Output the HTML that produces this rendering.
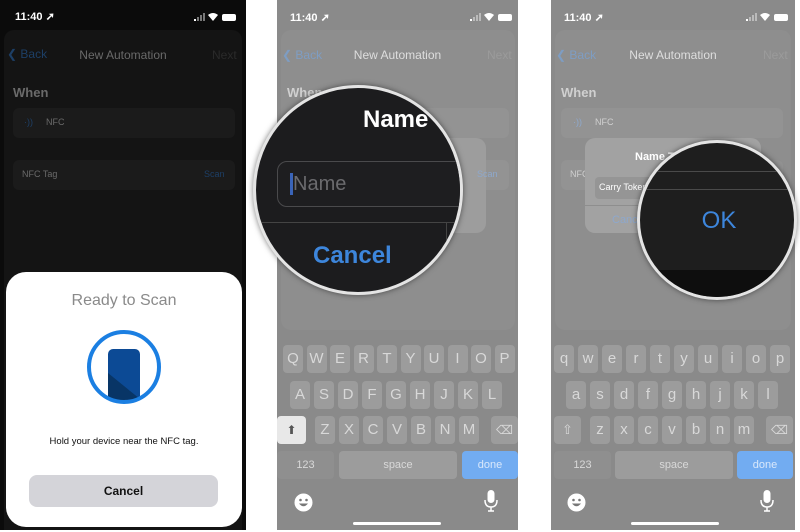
<!DOCTYPE html>
<html><head><meta charset="utf-8"><style>
*{margin:0;padding:0;box-sizing:border-box}
body{width:800px;height:532px;background:#fff;position:relative;overflow:hidden;font-family:"Liberation Sans",sans-serif}
.a{position:absolute}
.p{position:absolute;top:0;height:530px;overflow:hidden}
.k{position:absolute;height:28px;width:20px;background:#9c9c9c;border-radius:4px;color:#d8d8d8;font-size:15px;text-align:center;line-height:28px}
.t{white-space:nowrap}
</style></head><body>

<!-- PANEL 1 -->
<div class="p" style="left:0;width:246px;background:#0b0b0b">
 <div class="a t" style="left:15px;top:10px;color:#fff;font-size:11px;font-weight:bold">11:40 ➚</div>
 <svg class="a" style="left:194px;top:11px" width="44" height="12" viewBox="0 0 44 12">
  <rect x="0" y="8" width="2" height="2" fill="#fff"/><rect x="3" y="6" width="2" height="4" fill="#777"/><rect x="6" y="4" width="2" height="6" fill="#777"/><rect x="9" y="2" width="2" height="8" fill="#777"/>
  <path d="M14 4 Q19 0 24 4 L19 10Z" fill="#fff"/>
  <rect x="28" y="3" width="14" height="7" rx="2" fill="#fff"/>
 </svg>
 <div class="a" style="left:4px;top:30px;width:238px;height:510px;background:#141414;border-radius:10px"></div>
 <div class="a t" style="left:7px;top:47px;color:#1d3f66;font-size:12px">❮ Back</div>
 <div class="a t" style="left:0;width:246px;text-align:center;top:48px;color:#6a6a6a;font-size:12px">New Automation</div>
 <div class="a t" style="left:212px;top:48px;color:#2a2a2a;font-size:12px">Next</div>
 <div class="a t" style="left:13px;top:85px;color:#6a6a6a;font-size:13px;font-weight:bold">When</div>
 <div class="a" style="left:13px;top:108px;width:222px;height:30px;background:#1b1b1b;border-radius:6px"></div>
 <div class="a t" style="left:24px;top:117px;color:#1d3f66;font-size:9px">·))</div>
 <div class="a t" style="left:46px;top:117px;color:#6a6a6a;font-size:9px">NFC</div>
 <div class="a" style="left:13px;top:160px;width:222px;height:30px;background:#1b1b1b;border-radius:6px"></div>
 <div class="a t" style="left:22px;top:169px;color:#6a6a6a;font-size:9px">NFC Tag</div>
 <div class="a t" style="left:204px;top:169px;color:#1d3f66;font-size:9px">Scan</div>
 <div class="a" style="left:6px;top:272px;width:236px;height:255px;background:#fff;border-radius:20px"></div>
 <div class="a t" style="left:0;width:248px;text-align:center;top:292px;color:#8a8a8a;font-size:16px">Ready to Scan</div>
 <svg class="a" style="left:86px;top:329px" width="76" height="76" viewBox="0 0 76 76">
  <defs><clipPath id="c"><circle cx="38" cy="38" r="34"/></clipPath></defs>
  <g clip-path="url(#c)"><rect x="22" y="20" width="32" height="60" rx="5" fill="#0c4a95"/><path d="M22 44 L54 70 L54 80 L22 80Z" fill="#083566"/></g>
  <circle cx="38" cy="38" r="35" fill="none" stroke="#1b7fe2" stroke-width="4"/>
 </svg>
 <div class="a t" style="left:0;width:248px;text-align:center;top:436px;color:#111;font-size:9.5px">Hold your device near the NFC tag.</div>
 <div class="a" style="left:29px;top:475px;width:189px;height:32px;background:#d4d4d9;border-radius:8px;text-align:center;line-height:32px;font-size:12px;font-weight:bold;color:#111">Cancel</div>
</div>

<!-- PANEL 2 -->
<div class="p" style="left:277px;width:241px;background:#8a8a8a">
 <div class="a t" style="left:13px;top:11px;color:#fff;font-size:11px;font-weight:bold">11:40 ➚</div>
 <svg class="a" style="left:193px;top:11px" width="44" height="12" viewBox="0 0 44 12">
  <rect x="0" y="8" width="2" height="2" fill="#fff"/><rect x="3" y="6" width="2" height="4" fill="#bbb"/><rect x="6" y="4" width="2" height="6" fill="#bbb"/><rect x="9" y="2" width="2" height="8" fill="#bbb"/>
  <path d="M14 4 Q19 0 24 4 L19 10Z" fill="#fff"/>
  <rect x="28" y="3" width="14" height="7" rx="2" fill="#fff"/>
 </svg>
 <div class="a" style="left:4px;top:30px;width:234px;height:300px;background:#8e8e8e;border-radius:10px"></div>
 <div class="a t" style="left:5px;top:48px;color:#7e9dc3;font-size:12px">❮ Back</div>
 <div class="a t" style="left:0;width:241px;text-align:center;top:48px;color:#dedede;font-size:12px">New Automation</div>
 <div class="a t" style="left:210px;top:48px;color:#9b9b9b;font-size:12px">Next</div>
 <div class="a t" style="left:10px;top:85px;color:#d0d0d0;font-size:13px;font-weight:bold">When</div>
 <div class="a" style="left:10px;top:108px;width:222px;height:30px;background:#939393;border-radius:6px"></div>
 <div class="a" style="left:10px;top:160px;width:222px;height:30px;background:#939393;border-radius:6px"></div>
 <div class="a" style="left:33px;top:138px;width:176px;height:95px;background:#9d9d9d;border-radius:10px"></div>
 <div class="a t" style="left:200px;top:169px;color:#8ea8cc;font-size:9px">Scan</div>
</div>

<!-- PANEL 3 -->
<div class="p" style="left:551px;width:244px;background:#8a8a8a">
 <div class="a t" style="left:13px;top:11px;color:#fff;font-size:11px;font-weight:bold">11:40 ➚</div>
 <svg class="a" style="left:195px;top:11px" width="44" height="12" viewBox="0 0 44 12">
  <rect x="0" y="8" width="2" height="2" fill="#fff"/><rect x="3" y="6" width="2" height="4" fill="#bbb"/><rect x="6" y="4" width="2" height="6" fill="#bbb"/><rect x="9" y="2" width="2" height="8" fill="#bbb"/>
  <path d="M14 4 Q19 0 24 4 L19 10Z" fill="#fff"/>
  <rect x="28" y="3" width="14" height="7" rx="2" fill="#fff"/>
 </svg>
 <div class="a" style="left:4px;top:30px;width:236px;height:300px;background:#8e8e8e;border-radius:10px"></div>
 <div class="a t" style="left:5px;top:48px;color:#7e9dc3;font-size:12px">❮ Back</div>
 <div class="a t" style="left:0;width:244px;text-align:center;top:48px;color:#dedede;font-size:12px">New Automation</div>
 <div class="a t" style="left:212px;top:48px;color:#9b9b9b;font-size:12px">Next</div>
 <div class="a t" style="left:10px;top:85px;color:#d0d0d0;font-size:13px;font-weight:bold">When</div>
 <div class="a" style="left:10px;top:108px;width:222px;height:30px;background:#939393;border-radius:6px"></div>
 <div class="a t" style="left:22px;top:117px;color:#8ea8cc;font-size:9px">·))</div>
 <div class="a t" style="left:44px;top:117px;color:#d0d0d0;font-size:9px">NFC</div>
 <div class="a" style="left:10px;top:160px;width:222px;height:30px;background:#939393;border-radius:6px"></div>
 <div class="a t" style="left:19px;top:169px;color:#d0d0d0;font-size:9px">NFC</div>
 <div class="a" style="left:34px;top:138px;width:176px;height:95px;background:#a2a2a2;border-radius:10px"></div>
 <div class="a t" style="left:84px;top:151px;color:#fff;font-size:11px;font-weight:bold">Name T</div>
 <div class="a" style="left:44px;top:177px;width:156px;height:22px;background:#959595;border-radius:4px"></div>
 <div class="a t" style="left:48px;top:182px;color:#fff;font-size:9px">Carry Token</div>
 <div class="a" style="left:34px;top:205px;width:176px;height:1px;background:#8e8e8e"></div>
 <div class="a t" style="left:61px;top:214px;color:#8ea8cc;font-size:11px">Canc</div>
</div>

<!-- Keyboards -->
<div class="a" style="left:277px;top:330px;width:241px;height:200px">
 <div class="k" style="left:6px;top:15px">Q</div><div class="k" style="left:29.5px;top:15px">W</div><div class="k" style="left:53px;top:15px">E</div><div class="k" style="left:76.5px;top:15px">R</div><div class="k" style="left:100px;top:15px">T</div><div class="k" style="left:123.5px;top:15px">Y</div><div class="k" style="left:147px;top:15px">U</div><div class="k" style="left:170.5px;top:15px">I</div><div class="k" style="left:194px;top:15px">O</div><div class="k" style="left:217.5px;top:15px">P</div>
 <div class="k" style="left:13px;top:51px">A</div><div class="k" style="left:37px;top:51px">S</div><div class="k" style="left:61px;top:51px">D</div><div class="k" style="left:85px;top:51px">F</div><div class="k" style="left:109px;top:51px">G</div><div class="k" style="left:133px;top:51px">H</div><div class="k" style="left:157px;top:51px">J</div><div class="k" style="left:181px;top:51px">K</div><div class="k" style="left:205px;top:51px">L</div>
 <div class="k" style="left:0;top:86px;width:29px;background:#e8e8e8;color:#555;font-size:12px">⬆</div>
 <div class="k" style="left:38px;top:86px">Z</div><div class="k" style="left:62px;top:86px">X</div><div class="k" style="left:86px;top:86px">C</div><div class="k" style="left:110px;top:86px">V</div><div class="k" style="left:134px;top:86px">B</div><div class="k" style="left:158px;top:86px">N</div><div class="k" style="left:182px;top:86px">M</div>
 <div class="k" style="left:214px;top:86px;width:27px;font-size:12px">⌫</div>
 <div class="k" style="left:0;top:121px;width:57px;background:#8f8f8f;font-size:11px">123</div>
 <div class="k" style="left:62px;top:121px;width:118px;font-size:11px">space</div>
 <div class="k" style="left:185px;top:121px;width:56px;background:#72acf1;color:#d9e8fb;font-size:11px">done</div>
 <svg class="a" style="left:17px;top:163px" width="19" height="19" viewBox="0 0 19 19"><circle cx="9.5" cy="9.5" r="9" fill="#fff"/><circle cx="6.5" cy="7" r="1.3" fill="#777"/><circle cx="12.5" cy="7" r="1.3" fill="#777"/><path d="M5 10.5 Q9.5 16 14 10.5Z" fill="#777"/></svg>
 <svg class="a" style="left:207px;top:160px" width="14" height="22" viewBox="0 0 14 22"><rect x="3.5" y="0" width="7" height="13" rx="3.5" fill="#fff"/><path d="M1 10 Q1 17 7 17 Q13 17 13 10 M7 17 V21 M4 21 H10" fill="none" stroke="#fff" stroke-width="1.5"/></svg>
 <div class="a" style="left:76px;top:192px;width:88px;height:3px;border-radius:2px;background:#fff"></div>
</div>
<div class="a" style="left:551px;top:330px;width:244px;height:200px">
 <div class="k" style="left:3px;top:15px">q</div><div class="k" style="left:27px;top:15px">w</div><div class="k" style="left:51px;top:15px">e</div><div class="k" style="left:75px;top:15px">r</div><div class="k" style="left:99px;top:15px">t</div><div class="k" style="left:123px;top:15px">y</div><div class="k" style="left:147px;top:15px">u</div><div class="k" style="left:171px;top:15px">i</div><div class="k" style="left:195px;top:15px">o</div><div class="k" style="left:219px;top:15px">p</div>
 <div class="k" style="left:15px;top:51px">a</div><div class="k" style="left:39px;top:51px">s</div><div class="k" style="left:63px;top:51px">d</div><div class="k" style="left:87px;top:51px">f</div><div class="k" style="left:111px;top:51px">g</div><div class="k" style="left:135px;top:51px">h</div><div class="k" style="left:159px;top:51px">j</div><div class="k" style="left:183px;top:51px">k</div><div class="k" style="left:207px;top:51px">l</div>
 <div class="k" style="left:3px;top:86px;width:27px;font-size:13px">⇧</div>
 <div class="k" style="left:39px;top:86px">z</div><div class="k" style="left:63px;top:86px">x</div><div class="k" style="left:87px;top:86px">c</div><div class="k" style="left:111px;top:86px">v</div><div class="k" style="left:135px;top:86px">b</div><div class="k" style="left:159px;top:86px">n</div><div class="k" style="left:183px;top:86px">m</div>
 <div class="k" style="left:215px;top:86px;width:27px;font-size:12px">⌫</div>
 <div class="k" style="left:3px;top:121px;width:57px;background:#8f8f8f;font-size:11px">123</div>
 <div class="k" style="left:64px;top:121px;width:118px;font-size:11px">space</div>
 <div class="k" style="left:186px;top:121px;width:56px;background:#72acf1;color:#d9e8fb;font-size:11px">done</div>
 <svg class="a" style="left:16px;top:163px" width="19" height="19" viewBox="0 0 19 19"><circle cx="9.5" cy="9.5" r="9" fill="#fff"/><circle cx="6.5" cy="7" r="1.3" fill="#777"/><circle cx="12.5" cy="7" r="1.3" fill="#777"/><path d="M5 10.5 Q9.5 16 14 10.5Z" fill="#777"/></svg>
 <svg class="a" style="left:209px;top:160px" width="14" height="22" viewBox="0 0 14 22"><rect x="3.5" y="0" width="7" height="13" rx="3.5" fill="#fff"/><path d="M1 10 Q1 17 7 17 Q13 17 13 10 M7 17 V21 M4 21 H10" fill="none" stroke="#fff" stroke-width="1.5"/></svg>
 <div class="a" style="left:80px;top:192px;width:88px;height:3px;border-radius:2px;background:#fff"></div>
</div>

<!-- Magnifier 2 -->
<div class="a" style="left:253px;top:85px;width:210px;height:210px;border-radius:50%;overflow:hidden;background:#1c1c1e;border:3px solid #e4e4e4;box-shadow:0 0 6px rgba(0,0,0,.5)">
 <div class="a t" style="left:107px;top:18px;color:#fff;font-size:24px;font-weight:bold">Name</div>
 <div class="a" style="left:21px;top:73px;width:210px;height:46px;border:1px solid #4a4a4c;border-radius:10px;background:#1e1e20"></div>
 <div class="a" style="left:34px;top:85px;width:3px;height:22px;background:#3a64b8"></div>
 <div class="a t" style="left:37px;top:85px;color:#6b6b6e;font-size:20px">Name</div>
 <div class="a" style="left:0;top:134px;width:210px;height:1px;background:#444"></div>
 <div class="a" style="left:190px;top:134px;width:1px;height:80px;background:#444"></div>
 <div class="a t" style="left:57px;top:154px;color:#3d86dc;font-size:24px;font-weight:bold">Cancel</div>
</div>

<!-- Magnifier 3 -->
<div class="a" style="left:637px;top:140px;width:160px;height:160px;border-radius:50%;overflow:hidden;background:#1e1e1e;border:3px solid #e4e4e4;box-shadow:0 0 6px rgba(0,0,0,.5)">
 <div class="a" style="left:0;top:28px;width:160px;height:1px;background:#4a4a4a"></div>
 <div class="a" style="left:0;top:46px;width:160px;height:1px;background:#4a4a4a"></div>
 <div class="a t" style="left:0;width:158px;text-align:center;top:64px;color:#3d86dc;font-size:24px">OK</div>
 <div class="a" style="left:0;top:127px;width:160px;height:40px;background:#0e0e0e"></div>
</div>
</body></html>
